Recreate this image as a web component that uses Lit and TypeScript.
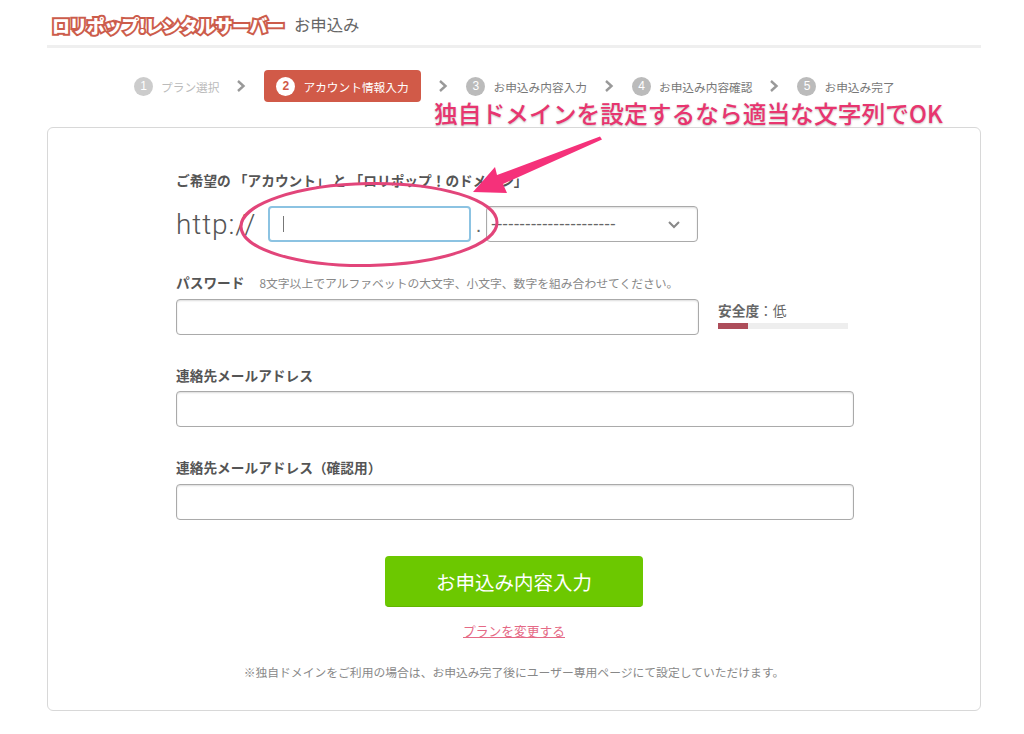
import { LitElement, html, css, svg } from "lit";
import { customElement } from "lit/decorators.js";

const chevron = html`<svg class="chev" width="10" height="14" viewBox="0 0 10 14"><path d="M2 2l5.5 5L2 12" fill="none" stroke="#999" stroke-width="2.4"/></svg>`;

@customElement("app-root")
export class AppRoot extends LitElement {
  static styles = css`
    :host { display: block; position: relative; width: 1024px; height: 734px; overflow: hidden; background: #fff; color: #555;
      font-family: "Noto Sans CJK JP", "Liberation Sans", sans-serif; }
    .page { width: 934px; margin-left: 47px; display: flex; flex-direction: column; }
    .head { height: 41px; border-bottom: 3px solid #efefef; display: flex; align-items: center; gap: 10px; padding: 4px 0 0 5px; }
    .logo { font-size: 18px; font-weight: 900; color: #fff; -webkit-text-stroke: 4px #cc5c4b; paint-order: stroke fill; letter-spacing: -0.65px; white-space: nowrap; line-height: 24px; }
    .title { font-size: 16.4px; color: #666; line-height: 22px; margin-bottom: 2px; }
    .steps { display: flex; align-items: center; height: 32px; margin-top: 22px; padding-left: 87px; }
    .step { display: flex; align-items: center; gap: 8px; font-size: 11.7px; color: #777; white-space: nowrap; height: 32px; }
    .step .num { width: 19px; height: 19px; border-radius: 50%; background: #bbb; color: #fff; font-size: 12px; font-weight: 500; display: flex; align-items: center; justify-content: center; font-family: "Liberation Sans", sans-serif; }
    .step.done { color: #bbb; }
    .step.done .num { background: #ccc; }
    .step.active { background: #d15a48; color: #fff; border-radius: 4px; padding: 0 12px; width: 157px; box-sizing: border-box; }
    .step.active .num { background: #fff; color: #d15a48; font-weight: 700; }
    .chev { margin: 0 18px 0 17px; flex: none; }
    .card { margin-top: 25px; height: 584px; box-sizing: border-box; border: 1px solid #d8d8d8; border-radius: 6px; padding: 42px 0 0 128px; display: flex; flex-direction: column; }
    .label { font-size: 13.7px; font-weight: 700; color: #555; line-height: 20px; white-space: nowrap; }
    .hint { font-size: 11.8px; font-weight: 400; color: #888; margin-left: 15px; }
    .domain { display: flex; align-items: center; height: 36px; margin-top: 16px; }
    .http { font-size: 28px; color: #555; font-family: "Roboto", sans-serif; width: 92px; font-weight: 300; letter-spacing: 0.9px; white-space: nowrap; }
    .box { box-sizing: border-box; height: 36px; border: 1px solid #aaa; border-radius: 4px; background: #fff; box-shadow: inset 0 1px 2px rgba(0,0,0,.14); }
    .focus { width: 203px; border: 2px solid #8cc3e2; box-shadow: none; display: flex; align-items: center; padding-left: 13px; }
    .caret { width: 1px; height: 16px; background: #777; }
    .dot { width: 15px; font-size: 20px; text-align: center; color: #666; font-family: "Liberation Sans", sans-serif; line-height: 36px; padding-top: 2px; }
    .select { width: 212px; display: flex; align-items: center; justify-content: space-between; padding: 0 16px 0 4px; font-size: 17px; color: #666; font-family: "Liberation Sans", sans-serif; }
    .pw-label { margin-top: 30px; }
    .pw { display: flex; margin-top: 6px; height: 36px; }
    .pw .box { width: 523px; }
    .meter { margin-left: 19px; width: 130px; display: flex; flex-direction: column; }
    .meter-label { font-size: 13.7px; font-weight: 400; line-height: 20px; color: #666; margin-top: 1px; }
    .meter-label b { font-weight: 700; }
    .bar { height: 6px; background: #eee; margin-top: 3px; }
    .fill { height: 6px; width: 30px; background: #ad4d5a; }
    .mail-label { margin-top: 30px; }
    .wide { width: 678px; margin-top: 6px; }
    .mail2 { margin-top: 30px; }
    .wide2 { margin-top: 7px; }
    .actions { margin-left: -128px; display: flex; flex-direction: column; align-items: center; }
    .btn { width: 258px; height: 51px; margin-top: 36px; background: #6cc800; border-radius: 4px; color: #fff; font-size: 19.5px; display: flex; align-items: center; justify-content: center; border-bottom: 1px solid #62b500; box-sizing: border-box; }
    .link { margin-top: 14px; font-size: 12.75px; line-height: 20px; color: #e56a86; text-decoration: underline; }
    .note { margin-top: 21px; font-size: 11.8px; line-height: 20px; color: #888; white-space: nowrap; }
    .overlay { position: absolute; left: 0; top: 0; pointer-events: none; }
    .callout { position: absolute; left: 434px; top: 95px; font-size: 23.75px; line-height: 36px; white-space: nowrap; color: #e8356f; font-weight: 500;
      -webkit-text-stroke: 3px #fff; paint-order: stroke fill; text-shadow: 0 1px 2px rgba(0,0,0,.25); }
  `;

  render() {
    return html`
      <div class="page">
        <div class="head">
          <span class="logo">ロリポップ!レンタルサーバー</span>
          <span class="title">お申込み</span>
        </div>
        <div class="steps">
          <div class="step done"><span class="num">1</span>プラン選択</div>
          ${chevron}
          <div class="step active"><span class="num">2</span>アカウント情報入力</div>
          ${chevron}
          <div class="step"><span class="num">3</span>お申込み内容入力</div>
          ${chevron}
          <div class="step"><span class="num">4</span>お申込み内容確認</div>
          ${chevron}
          <div class="step"><span class="num">5</span>お申込み完了</div>
        </div>
        <div class="card">
          <div class="label">ご希望の 「アカウント」 と 「ロリポップ！のドメイン」</div>
          <div class="domain">
            <span class="http">http://</span>
            <div class="box focus"><span class="caret"></span></div>
            <span class="dot">.</span>
            <div class="box select">
              <span>----------------------</span>
              <svg width="14" height="9" viewBox="0 0 14 9"><path d="M2 2l5 5 5-5" fill="none" stroke="#888" stroke-width="2"/></svg>
            </div>
          </div>
          <div class="label pw-label">パスワード<span class="hint">8文字以上でアルファベットの大文字、小文字、数字を組み合わせてください。</span></div>
          <div class="pw">
            <div class="box"></div>
            <div class="meter">
              <div class="meter-label"><b>安全度</b>：低</div>
              <div class="bar"><div class="fill"></div></div>
            </div>
          </div>
          <div class="label mail-label">連絡先メールアドレス</div>
          <div class="box wide"></div>
          <div class="label mail2">連絡先メールアドレス（確認用）</div>
          <div class="box wide wide2"></div>
          <div class="actions">
            <div class="btn">お申込み内容入力</div>
            <div class="link">プランを変更する</div>
            <div class="note">※独自ドメインをご利用の場合は、お申込み完了後にユーザー専用ページにて設定していただけます。</div>
          </div>
        </div>
      </div>
      <svg class="overlay" width="1024" height="734" viewBox="0 0 1024 734">
        ${svg`<ellipse cx="369" cy="224.5" rx="128" ry="41" fill="none" stroke="#e2457a" stroke-width="3" transform="rotate(-1 369 224)"/>
        <path d="M600 136.5 L602 139.5 L503 184 L507 193 L473 192 L495 167 L497 175 Z" fill="#f5317a"/>`}
      </svg>
      <div class="callout">独自ドメインを設定するなら適当な文字列でOK</div>
    `;
  }
}
